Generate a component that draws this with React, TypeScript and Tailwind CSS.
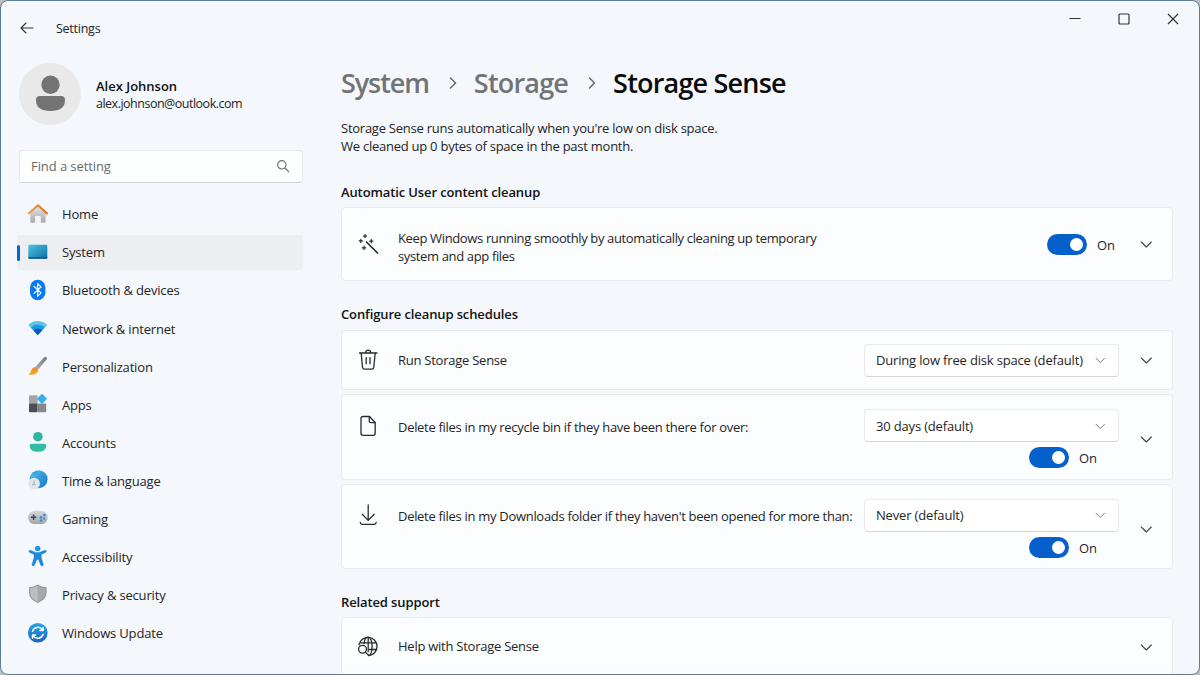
import { useState, type ReactNode } from "react";
import clsx from "clsx";

interface NavEntry {
  label: string;
  icon: ReactNode;
}

const NAV_ITEMS: NavEntry[] = [
  { label: "Home", icon: <HomeIcon /> },
  { label: "System", icon: <SystemIcon /> },
  { label: "Bluetooth & devices", icon: <BluetoothIcon /> },
  { label: "Network & internet", icon: <NetworkIcon /> },
  { label: "Personalization", icon: <BrushIcon /> },
  { label: "Apps", icon: <AppsIcon /> },
  { label: "Accounts", icon: <AccountsIcon /> },
  { label: "Time & language", icon: <TimeIcon /> },
  { label: "Gaming", icon: <GamingIcon /> },
  { label: "Accessibility", icon: <AccessibilityIcon /> },
  { label: "Privacy & security", icon: <ShieldIcon /> },
  { label: "Windows Update", icon: <UpdateIcon /> },
];

function NavSvg({ children }: { children: ReactNode }) {
  return (
    <svg viewBox="0 0 20 20" className="mb-0.5 size-5 shrink-0 overflow-visible">
      {children}
    </svg>
  );
}

function HomeIcon() {
  return (
    <NavSvg>
      <defs>
        <linearGradient id="home-wall" x1="0" y1="0" x2="0" y2="1">
          <stop offset="0" stopColor="#e4e4e6" />
          <stop offset="1" stopColor="#a9a9ad" />
        </linearGradient>
        <linearGradient id="home-roof" x1="0" y1="0" x2="1" y2="0">
          <stop offset="0" stopColor="#f0a04b" />
          <stop offset="1" stopColor="#d9731a" />
        </linearGradient>
      </defs>
      <path
        d="M2.3 8.5 10 2l7.6 6.5v9.3q0 1-1 1h-3.8v-6.2q0-.6-.6-.6H7.7q-.6 0-.6.6v6.2H3.3q-1 0-1-1z"
        fill="url(#home-wall)"
      />
      <path
        d="M.9 9.4 9.9 1.3l9 8.1"
        fill="none"
        stroke="url(#home-roof)"
        strokeWidth="2.1"
        strokeLinecap="round"
        strokeLinejoin="round"
      />
    </NavSvg>
  );
}

function SystemIcon() {
  return (
    <NavSvg>
      <defs>
        <linearGradient id="sys" x1="0" y1="0" x2="1" y2="1">
          <stop offset="0" stopColor="#4fc4e6" />
          <stop offset="0.6" stopColor="#2590bd" />
          <stop offset="1" stopColor="#146c99" />
        </linearGradient>
      </defs>
      <rect x="0.3" y="2.8" width="19" height="14" rx="1" fill="url(#sys)" />
      <path d="M.3 15h19v.8q0 1-1 1h-17q-1 0-1-1z" fill="#125f8c" />
    </NavSvg>
  );
}

function BluetoothIcon() {
  return (
    <NavSvg>
      <rect x="2" y="-0.2" width="15.4" height="20.4" rx="7.7" fill="#0a7af0" />
      <path
        d="M6 6.3l7 6.6-3.4 3.4V3.6L13 7l-7 6.4"
        fill="none"
        stroke="#fff"
        strokeWidth="1.2"
        strokeLinejoin="round"
        strokeLinecap="round"
      />
    </NavSvg>
  );
}

function NetworkIcon() {
  return (
    <NavSvg>
      <path d="M.3 6.9Q4.3 3 9.8 3t9.5 3.9L9.8 17z" fill="#5cc5ee" />
      <path d="M2.8 9.5Q5.8 6.6 9.8 6.6t7 2.9L9.8 17z" fill="#1f9be0" />
      <path d="M5.4 12.3q1.9-1.9 4.4-1.9t4.4 1.9L9.8 17z" fill="#0b57c4" />
    </NavSvg>
  );
}

function BrushIcon() {
  return (
    <NavSvg>
      <defs>
        <linearGradient id="brush" x1="0" y1="1" x2="1" y2="0">
          <stop offset="0" stopColor="#b0b0b5" />
          <stop offset="1" stopColor="#77777f" />
        </linearGradient>
        <linearGradient id="bristle" x1="0" y1="0" x2="0" y2="1">
          <stop offset="0" stopColor="#ee8a2a" />
          <stop offset="1" stopColor="#f7a81b" />
        </linearGradient>
      </defs>
      <path
        d="M7.3 11 16.1 1.3q1.2-1.1 2.4-.1 1.1 1.1.1 2.4L10 13.8z"
        fill="url(#brush)"
      />
      <path
        d="M6.2 11.3q1.2-.7 3 .9 1.6 1.6.6 3.3-2.3 3.8-9.5 3.3 2.2-1.4 2.6-3.6.6-3 3.3-3.9z"
        fill="url(#bristle)"
      />
    </NavSvg>
  );
}

function AppsIcon() {
  return (
    <NavSvg>
      <rect x="1" y="1.2" width="8.6" height="8.6" rx="0.8" fill="#a3a5a9" />
      <rect x="1" y="9.4" width="8.6" height="8.8" rx="0.8" fill="#4c4e53" />
      <rect x="9.4" y="9.4" width="8.8" height="8.8" rx="0.8" fill="#85878c" />
      <rect
        x="10.3"
        y="1.1"
        width="7.4"
        height="7.4"
        rx="0.8"
        fill="#35b0ea"
        transform="rotate(45 14 4.8)"
      />
    </NavSvg>
  );
}

function AccountsIcon() {
  return (
    <NavSvg>
      <circle cx="9.9" cy="4.7" r="4.8" fill="#2cb59f" />
      <path
        d="M3.6 11.8h12.6q2 0 2 2 0 6-8.3 6t-8.3-6q0-2 2-2z"
        fill="#2fbda6"
      />
    </NavSvg>
  );
}

function TimeIcon() {
  return (
    <NavSvg>
      <defs>
        <linearGradient id="globe" x1="0" y1="0" x2="1" y2="1">
          <stop offset="0" stopColor="#55c3ee" />
          <stop offset="1" stopColor="#1377c4" />
        </linearGradient>
      </defs>
      <circle cx="10.6" cy="9.2" r="9" fill="url(#globe)" />
      <path
        d="M4.5 3q3.5 1 4-2.4M13 2.5q-2 2 .5 3.5t5.2.5M16 16q-2-3 2.5-6"
        fill="none"
        stroke="#2a86bd"
        strokeWidth="1"
        opacity="0.6"
      />
      <circle cx="6" cy="13.6" r="5.9" fill="#e2e5ea" />
      <path
        d="M6 10.3v3.6l2 1M6 13.9l-2 1"
        fill="none"
        stroke="#9da3ab"
        strokeWidth="0.9"
      />
    </NavSvg>
  );
}

function GamingIcon() {
  return (
    <NavSvg>
      <defs>
        <linearGradient id="pad" x1="0" y1="0" x2="0" y2="1">
          <stop offset="0" stopColor="#d4d6da" />
          <stop offset="1" stopColor="#a2a5ab" />
        </linearGradient>
      </defs>
      <rect x="0.2" y="2.8" width="19.4" height="13.2" rx="6.3" fill="url(#pad)" />
      <path d="M5.6 6.6V12M2.9 9.3h5.4" stroke="#45474c" strokeWidth="1.5" />
      <g fill="#2b86dc">
        <circle cx="16.4" cy="7" r="1.3" />
        <circle cx="13" cy="9.2" r="1.3" />
        <circle cx="16" cy="10.6" r="1.1" />
        <circle cx="13" cy="12.4" r="1.2" />
      </g>
    </NavSvg>
  );
}

function AccessibilityIcon() {
  return (
    <NavSvg>
      <circle cx="9.7" cy="2.4" r="2.7" fill="#2492e0" />
      <path
        d="M2.5 4.3 6.6 6q3 1 6 0l4.2-1.7q1.3-.3 1.6.7.2 1-.9 1.5L13.3 8.5v3.3l2 6.5q.2 1.3-.9 1.6t-1.7-.8L10.500 13.500h-1.700l-2.200 5.600q-.6 1.100-1.700.8t-.9-1.600l2-6.500V8.500L1.700 6.500Q.6 6 .9 5q.4-1 1.600-.7z"
        fill="#1e88d8"
        stroke="#1e88d8"
        strokeWidth="0.4"
      />
    </NavSvg>
  );
}

function ShieldIcon() {
  return (
    <NavSvg>
      <path
        d="M9.8.6q3.6 2.4 8.8 2.7v5.3q0 6.8-8.8 10.4Q1 15.4 1 8.6V3.3Q6.2 3 9.8.6z"
        fill="#96989c"
      />
      <path d="M9.8 2q3.3 1.9 7.6 2.3v4.4q0 5.6-7.6 9z" fill="#a6a8ac" />
      <path d="M9.8 2Q6.5 3.9 2.2 4.3v4.4q0 5.6 7.6 9z" fill="#bcbec1" />
    </NavSvg>
  );
}

function UpdateIcon() {
  return (
    <NavSvg>
      <defs>
        <linearGradient id="upd" x1="0" y1="0" x2="0" y2="1">
          <stop offset="0" stopColor="#2ca3e6" />
          <stop offset="1" stopColor="#1467bf" />
        </linearGradient>
      </defs>
      <circle cx="9.8" cy="9.8" r="9.8" fill="url(#upd)" />
      <g
        fill="none"
        stroke="#fff"
        strokeWidth="1.5"
        strokeLinecap="round"
        strokeLinejoin="round"
      >
        <path d="M4.5 8.400a5.600 5.600 0 0 1 10-1.600M15.100 4.400v3.200h-3.200" />
        <path d="M15.100 11.200a5.600 5.600 0 0 1-10 1.600M4.500 15.200V12h3.200" />
      </g>
    </NavSvg>
  );
}

// outline icons used on the cards
function LineSvg({ children }: { children: ReactNode }) {
  return (
    <svg
      viewBox="0 0 22 22"
      fill="none"
      stroke="#2b2b2e"
      strokeWidth="1.3"
      strokeLinecap="round"
      strokeLinejoin="round"
      className="size-[22px] shrink-0"
    >
      {children}
    </svg>
  );
}

function WandIcon() {
  return (
    <LineSvg>
      <path d="m9.5 9 11 11" strokeWidth="1.7" />
      <path
        d="M8 1.6v3M6.500 3.100h3M3.800 6.300v3.200M2.200 7.900h3.200M7 13v3.600M5.200 14.800h3.600M14.300 6.600v3.200M12.700 8.200h3.200"
        strokeWidth="1.2"
      />
    </LineSvg>
  );
}

function TrashIcon() {
  return (
    <LineSvg>
      <path d="M2.5 4H20M8.5 3.800a2.600 2.600 0 0 1 5.200 0" />
      <path d="m4.200 4.200 1.300 14q.2 2 2 2h7.300q1.800 0 2-2l1.400-14M9.200 8.700v6M13 8.700v6" />
    </LineSvg>
  );
}

function FileIcon() {
  return (
    <LineSvg>
      <path d="M6 1.5h6.500l5.700 6v10.800q0 2-2 2H6q-2 0-2-2V3.500q0-2 2-2z" />
      <path d="M12.300 1.800v4.400q0 1.500 1.500 1.500H18" />
    </LineSvg>
  );
}

function DownloadIcon() {
  return (
    <LineSvg>
      <path d="M11.2 1v15.200M5.300 10.300l5.900 6.100 6-6.100" />
      <path d="M3.200 18.300q.2 2 2 2h12q1.800 0 2-2" />
    </LineSvg>
  );
}

function GlobeSearchIcon() {
  return (
    <LineSvg>
      <path d="M2 8.800a9.100 9.100 0 1 1 10 10.700M2.800 6.800h16.700M12.500 13.500h6.900" />
      <path d="M7 7.500c.4-4 2-6.400 4-6.400 2.300 0 4.100 4 4.100 9.100s-1.400 9-3.600 9.300M11.200 1.100v14.600" />
      <circle cx="5.500" cy="13.300" r="3.900" />
      <path d="m8.400 16.200 3.200 3.200" />
    </LineSvg>
  );
}

function ChevronDown({ small = false }: { small?: boolean }) {
  return (
    <svg
      viewBox="0 0 12 12"
      fill="none"
      stroke={small ? "#77777a" : "#48484b"}
      strokeWidth={small ? "1.2" : "1.15"}
      strokeLinecap="round"
      strokeLinejoin="round"
      className={clsx("shrink-0", small ? "size-2.5" : "size-3")}
    >
      <path d="m1.300 4 5 5 5-5" />
    </svg>
  );
}

function CrumbChevron() {
  return (
    <svg
      viewBox="0 0 8 12"
      fill="none"
      stroke="#66666a"
      strokeWidth="1.5"
      strokeLinecap="round"
      strokeLinejoin="round"
      className="mr-[17px] ml-5 h-3 w-2 shrink-0"
    >
      <path d="m1.5 1 5 5-5 5" />
    </svg>
  );
}

function Toggle() {
  const [on, setOn] = useState(true);

  return (
    <div className="flex items-center">
      <button
        onClick={() => setOn(!on)}
        className={clsx(
          "flex h-[21px] w-10 items-center rounded-full px-1",
          on ? "justify-end bg-[#0560cb]" : "justify-start bg-[#8a8a8d]",
        )}
      >
        <span className="size-[13px] rounded-full bg-white" />
      </button>
      <span className="ml-2.5 pt-px text-[13px] leading-[18px]">
        {on ? "On" : "Off"}
      </span>
    </div>
  );
}

function Select({ value }: { value: string }) {
  return (
    <button className="flex h-[33px] w-[255px] items-center justify-between rounded border border-[#e9eaec] border-b-[#d5d6d8] bg-white pr-[13px] pl-[11px] text-[13px] tracking-[-0.17px]">
      <span className="pt-0.5">{value}</span>
      <ChevronDown small />
    </button>
  );
}

function Card({
  className,
  children,
}: {
  className: string;
  children: ReactNode;
}) {
  return (
    <section
      className={clsx(
        "flex shrink-0 rounded border border-[#e8eaed] bg-[#fcfdfe] pr-5 pl-[15px] text-[13px]",
        className,
      )}
    >
      {children}
    </section>
  );
}

function CleanupCard({
  icon,
  label,
  value,
}: {
  icon: ReactNode;
  label: string;
  value: string;
}) {
  return (
    <Card className="h-[85.5px] pt-3.5">
      <div className="flex h-[33px] items-center">
        {icon}
        <p className="ml-[19px] pt-1 tracking-[-0.3px] whitespace-nowrap">
          {label}
        </p>
      </div>
      <div className="mr-[21px] ml-auto flex flex-col items-end gap-[5px]">
        <Select value={value} />
        <div className="mr-[22px]">
          <Toggle />
        </div>
      </div>
      <div className="flex h-[60px] items-center">
        <ChevronDown />
      </div>
    </Card>
  );
}

function Heading({ children }: { children: ReactNode }) {
  return (
    <h2 className="text-[13px] leading-5 font-semibold tracking-[-0.12px] text-[#111]">
      {children}
    </h2>
  );
}

function TitleBar() {
  return (
    <header className="flex h-[54px] shrink-0 justify-between pr-5 pl-[19px]">
      <div className="flex items-center gap-[22px] text-[12.5px]">
        <svg
          viewBox="0 0 14 12"
          fill="none"
          stroke="#333"
          strokeWidth="1.1"
          strokeLinecap="round"
          strokeLinejoin="round"
          className="h-3 w-3.5"
        >
          <path d="M13 6H1M6 1 1 6l5 5" />
        </svg>
        <span className="pt-0.5 tracking-[-0.25px]">Settings</span>
      </div>
      <div className="flex h-[35px] items-center gap-[37px]">
        <svg viewBox="0 0 12 12" className="size-3" stroke="#333" strokeWidth="1.2">
          <path d="M.5 5.500h11" />
        </svg>
        <svg viewBox="0 0 12 12" className="size-3" fill="none" stroke="#333" strokeWidth="1.2">
          <rect x="1" y="1" width="10" height="10" rx="1" />
        </svg>
        <svg viewBox="0 0 12 12" className="size-3" stroke="#333" strokeWidth="1.2">
          <path d="m1 1 10 10M11 1 1 11" />
        </svg>
      </div>
    </header>
  );
}

function Sidebar() {
  const [active, setActive] = useState("System");

  return (
    <aside className="flex w-[302px] shrink-0 flex-col pt-2 pl-[18px]">
      <div className="flex h-[62px] items-center gap-[15px]">
        <svg viewBox="0 0 62 62" className="size-[62px] shrink-0">
          <circle cx="31" cy="31" r="31" fill="#e9e9ea" />
          <circle cx="31.5" cy="21.7" r="9.2" fill="#737374" />
          <path
            d="M21 33h21q4 0 4 4 0 11-14.500 11T17 37q0-4 4-4z"
            fill="#737374"
          />
        </svg>
        <div className="pt-0.5 leading-[17px]">
          <p className="text-[13px] font-semibold text-[#111]">Alex Johnson</p>
          <p className="text-[12.5px] tracking-[-0.5px]">
            alex.johnson@outlook.com
          </p>
        </div>
      </div>
      <div className="mt-[25px] flex h-[33px] items-center justify-between rounded border border-[#e6e8eb] border-b-[#cfd1d4] bg-[#fdfefe] pr-3 pl-[11px] text-[13px] tracking-[-0.08px] text-[#6a6a6d]">
        Find a setting
        <svg
          viewBox="0 0 14 14"
          fill="none"
          stroke="#6f6f72"
          strokeWidth="1.2"
          strokeLinecap="round"
          className="mb-0.5 size-3.5"
        >
          <circle cx="5.8" cy="5.8" r="4.2" />
          <path d="m9 9 3.8 3.8" />
        </svg>
      </div>
      <nav className="mt-3.5 -ml-0.5 flex flex-col gap-[3px]">
        {NAV_ITEMS.map(({ label, icon }) => (
          <button
            key={label}
            onClick={() => setActive(label)}
            className={clsx(
              "relative flex h-[35.1px] items-center gap-3.5 rounded pl-[11px] text-[13px] tracking-[-0.17px]",
              active === label && "bg-[#edeef1]",
            )}
          >
            {active === label && (
              <span className="absolute left-0 h-4 w-[3px] rounded-full bg-[#0a66cf]" />
            )}
            {icon}
            <span className="pt-px">{label}</span>
          </button>
        ))}
      </nav>
    </aside>
  );
}

function StorageSense() {
  return (
    <main className="flex w-[832px] shrink-0 flex-col">
      <div className="mt-2.5 flex h-9 items-center text-[27px] font-semibold tracking-[-0.8px] text-[#727376]">
        <span className="tracking-[-1.1px]">System</span>
        <CrumbChevron />
        <span>Storage</span>
        <CrumbChevron />
        <h1 className="text-[#0b0b0c]">Storage Sense</h1>
      </div>

      <p className="mt-[18px] text-[13px] leading-[18px] tracking-[-0.25px]">
        Storage Sense runs automatically when you're low on disk space.
        <br />
        We cleaned up 0 bytes of space in the past month.
      </p>

      <div className="mt-[27px]">
        <Heading>Automatic User content cleanup</Heading>
      </div>
      <Card className="mt-[5px] h-[74px] items-center">
        <WandIcon />
        <p className="ml-[19px] w-[440px] pt-[7px] leading-[17.5px] tracking-[-0.36px]">
          Keep Windows running smoothly by automatically cleaning up temporary
          system and app files
        </p>
        <div className="mr-[25px] ml-auto">
          <Toggle />
        </div>
        <ChevronDown />
      </Card>

      <div className="mt-[23px]">
        <Heading>Configure cleanup schedules</Heading>
      </div>
      <div className="mt-1.5 flex flex-col gap-1">
        <Card className="h-[60px] items-center">
          <TrashIcon />
          <p className="ml-[19px] pt-0.5 tracking-[-0.25px]">
            Run Storage Sense
          </p>
          <div className="mr-[21px] ml-auto">
            <Select value="During low free disk space (default)" />
          </div>
          <ChevronDown />
        </Card>
        <CleanupCard
          icon={<FileIcon />}
          label="Delete files in my recycle bin if they have been there for over:"
          value="30 days (default)"
        />
        <CleanupCard
          icon={<DownloadIcon />}
          label="Delete files in my Downloads folder if they haven't been opened for more than:"
          value="Never (default)"
        />
      </div>

      <div className="mt-[22.5px]">
        <Heading>Related support</Heading>
      </div>
      <Card className="mt-[5px] h-[60px] items-center">
        <GlobeSearchIcon />
        <p className="ml-[19px] tracking-[-0.25px]">Help with Storage Sense</p>
        <div className="ml-auto">
          <ChevronDown />
        </div>
      </Card>
    </main>
  );
}

export default function App() {
  return (
    <div className="h-[675px] w-[1200px] overflow-hidden bg-[#b9bec4] font-['Open_Sans','Noto_Sans',sans-serif] text-[#242426]">
      <div className="flex h-full flex-col overflow-hidden rounded-lg border border-[#5b7c9d] bg-[#f4f7fb]">
        <TitleBar />
        <div className="flex min-h-0 flex-1 gap-[38px]">
          <Sidebar />
          <StorageSense />
        </div>
      </div>
    </div>
  );
}
